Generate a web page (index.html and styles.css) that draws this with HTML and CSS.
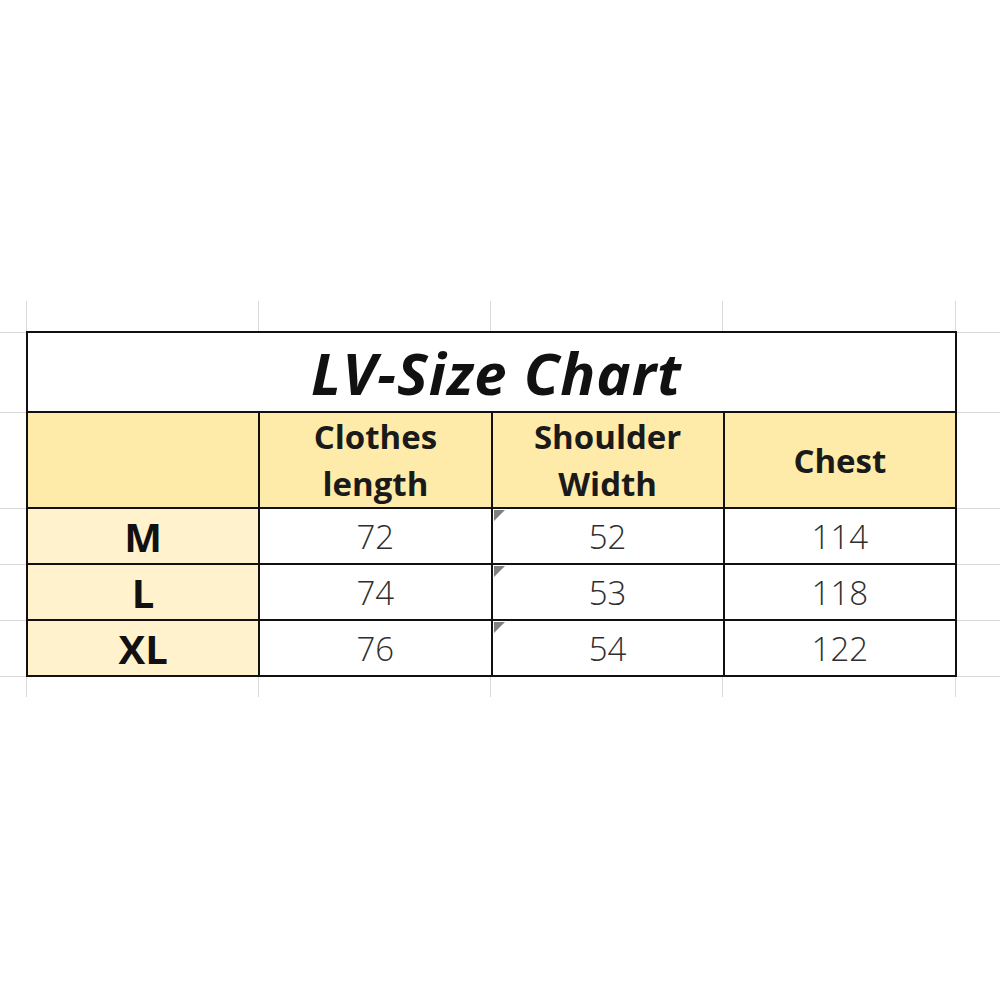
FILE: index.html
```html
<!DOCTYPE html>
<html lang="en">
<head>
<meta charset="utf-8">
<title>LV-Size Chart</title>
<link rel="stylesheet" href="styles.css">
</head>
<body>
<div class="sheet">
  <div class="chart">
    <div class="cell title">LV-Size Chart</div>
    <div class="cell head"></div>
    <div class="cell head">Clothes<br>length</div>
    <div class="cell head">Shoulder<br>Width</div>
    <div class="cell head">Chest</div>

    <div class="cell size">M</div>
    <div class="cell num">72</div>
    <div class="cell num flag">52</div>
    <div class="cell num">114</div>

    <div class="cell size">L</div>
    <div class="cell num">74</div>
    <div class="cell num flag">53</div>
    <div class="cell num">118</div>

    <div class="cell size">XL</div>
    <div class="cell num">76</div>
    <div class="cell num flag">54</div>
    <div class="cell num">122</div>
  </div>
</div>
</body>
</html>
```

FILE: styles.css
```css
html, body {
  margin: 0;
  padding: 0;
  background: #ffffff;
}

body {
  font-family: "Open Sans", "Noto Sans", "Liberation Sans", sans-serif;
}

.sheet {
  margin-top: 301px;
  padding: 30px 0 20px;
  background-color: #ffffff;
  background-repeat: no-repeat;
  background-image:
    linear-gradient(#d9d9d9, #d9d9d9),
    linear-gradient(#d9d9d9, #d9d9d9),
    linear-gradient(#d9d9d9, #d9d9d9),
    linear-gradient(#d9d9d9, #d9d9d9),
    linear-gradient(#d9d9d9, #d9d9d9),
    linear-gradient(#d9d9d9, #d9d9d9),
    linear-gradient(#d9d9d9, #d9d9d9),
    linear-gradient(#d9d9d9, #d9d9d9),
    linear-gradient(#d9d9d9, #d9d9d9),
    linear-gradient(#d9d9d9, #d9d9d9),
    linear-gradient(#d9d9d9, #d9d9d9);
  background-size:
    100% 1px, 100% 1px, 100% 1px, 100% 1px, 100% 1px, 100% 1px,
    1px 100%, 1px 100%, 1px 100%, 1px 100%, 1px 100%;
  background-position:
    0 31px, 0 111px, 0 207px, 0 263px, 0 319px, 0 375px,
    26px 0, 258px 0, 490px 0, 722px 0, 955px 0;
}

.chart {
  margin-left: 26px;
  width: 931px;
  box-sizing: border-box;
  display: grid;
  grid-template-columns: repeat(4, 1fr);
  grid-template-rows: 78px 94px 54px 54px 54px;
  gap: 2px;
  padding: 2px;
  background: #111111;
}

.cell {
  position: relative;
  display: flex;
  align-items: center;
  justify-content: center;
  text-align: center;
  background: #ffffff;
  color: #111111;
}

.title {
  grid-column: 1 / 5;
  padding-left: 10px;
  font-size: 58px;
  font-weight: 700;
  font-style: italic;
  letter-spacing: 1px;
}

.head {
  background: #ffeba9;
  font-size: 33px;
  font-weight: 700;
  line-height: 47px;
  color: #1a1a1a;
}

.size {
  background: #fff2cc;
  font-size: 40px;
  font-weight: 700;
  color: #111111;
}

.num {
  font-size: 33px;
  font-weight: 300;
  color: #2e2e2e;
}

.flag::before {
  content: "";
  position: absolute;
  top: 1px;
  left: 1px;
  width: 0;
  height: 0;
  border-top: 11px solid #808080;
  border-right: 11px solid transparent;
}
```
